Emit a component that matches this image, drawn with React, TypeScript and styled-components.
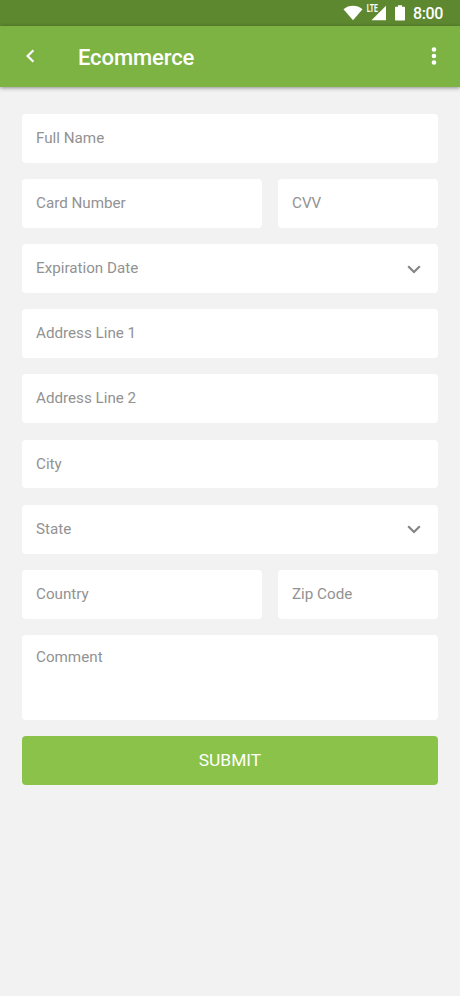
import React from "react";
import styled, { createGlobalStyle } from "styled-components";

const GlobalStyle = createGlobalStyle`
  * { box-sizing: border-box; }
  body { margin: 0; background: #f2f2f2; font-family: Roboto, sans-serif; }
`;

const Screen = styled.div`
  display: flex;
  flex-direction: column;
  height: 996px;
  background: #f2f2f2;
`;

const StatusBar = styled.div`
  display: flex;
  align-items: center;
  justify-content: flex-end;
  height: 26px;
  padding-right: 17px;
  background: #5d882f;
  color: #fff;
`;

const StatusIcons = styled.svg`
  width: 64px;
  height: 26px;
  margin-right: 7px;
  fill: #fff;
`;

const Lte = styled.text`
  font: 700 10px Roboto, sans-serif;
`;

const Clock = styled.span`
  font-size: 16px;
  line-height: 26px;
  padding-top: 2px;
  letter-spacing: -0.35px;
  font-weight: 500;
`;

const AppBar = styled.header`
  display: flex;
  align-items: center;
  height: 60.5px;
  padding: 0 23px 0 24px;
  background: #7cb342;
  color: #fff;
  box-shadow: 0 1px 4px rgba(0, 0, 0, 0.42);
`;

const IconButton = styled.button`
  display: flex;
  padding: 0;
  border: 0;
  background: none;
  color: inherit;
`;

const Title = styled.h1`
  flex: 1;
  margin: 0 0 0 42px;
  font-size: 22px;
  line-height: 28px;
  font-weight: 500;
  letter-spacing: -0.1px;
  padding-top: 3px;
`;

const Form = styled.main`
  display: flex;
  flex-direction: column;
  gap: 16.35px;
  padding: 27.4px 22px 0;
`;

const FieldRow = styled.div`
  display: grid;
  grid-template-columns: 240px 160px;
  gap: 16px;
`;

const FieldBox = styled.div<{ $tall?: boolean }>`
  display: flex;
  align-items: ${(p) => (p.$tall ? "flex-start" : "center")};
  justify-content: space-between;
  height: ${(p) => (p.$tall ? "84.8px" : "48.8px")};
  padding: ${(p) => (p.$tall ? "12px 17px 0 14px" : "0 17px 0 14px")};
  border-radius: 4px;
  background: #fff;
`;

const Label = styled.span`
  font-size: 15.2px;
  line-height: 20px;
  padding-bottom: 0.8px;
  color: #929292;
`;

const SubmitButton = styled.button`
  height: 48.8px;
  padding: 0 0 1px;
  border: 0;
  border-radius: 4px;
  background: #8bc34a;
  color: #fff;
  font: 400 17.4px/24px Roboto, sans-serif;
`;

const Field = ({ label, select, tall }: { label: string; select?: boolean; tall?: boolean }) => (
  <FieldBox $tall={tall}>
    <Label>{label}</Label>
    {select && (
      <svg width="14" height="10" viewBox="0 0 14 10" fill="none" stroke="#858585" strokeWidth="2.2">
        <path d="M1.2 2.2 7 8l5.8-5.8" />
      </svg>
    )}
  </FieldBox>
);

export default function App() {
  return (
    <Screen>
      <GlobalStyle />
      <StatusBar>
        <StatusIcons viewBox="342 0 64 26">
          <path d="M343.5 9.3C349 4.7 357 4.7 362.5 9.3L353 20.3Z" />
          <Lte x="366.8" y="12.3" textLength="11" lengthAdjust="spacingAndGlyphs">LTE</Lte>
          <path d="M386 5.8V20.3H371.5L378.5 13.3V12.8H379Z" />
          <path d="M398 5.2h4v1.6h2.2q.8 0 .8.8v12.1q0 .8-.8.8h-8.4q-.8 0-.8-.8V7.6q0-.8.8-.8h2.2z" />
        </StatusIcons>
        <Clock>8:00</Clock>
      </StatusBar>
      <AppBar>
        <IconButton aria-label="Back">
          <svg width="12" height="14" viewBox="0 0 12 14" fill="none" stroke="currentColor" strokeWidth="2.2">
            <path d="M9.4 1.2 3.6 7l5.8 5.8" />
          </svg>
        </IconButton>
        <Title>Ecommerce</Title>
        <IconButton aria-label="More options">
          <svg width="6" height="20" viewBox="0 0 6 20" fill="currentColor">
            <circle cx="3" cy="3.5" r="2.3" />
            <circle cx="3" cy="10" r="2.3" />
            <circle cx="3" cy="16.5" r="2.3" />
          </svg>
        </IconButton>
      </AppBar>
      <Form>
        <Field label="Full Name" />
        <FieldRow>
          <Field label="Card Number" />
          <Field label="CVV" />
        </FieldRow>
        <Field label="Expiration Date" select />
        <Field label="Address Line 1" />
        <Field label="Address Line 2" />
        <Field label="City" />
        <Field label="State" select />
        <FieldRow>
          <Field label="Country" />
          <Field label="Zip Code" />
        </FieldRow>
        <Field label="Comment" tall />
        <SubmitButton>SUBMIT</SubmitButton>
      </Form>
    </Screen>
  );
}
